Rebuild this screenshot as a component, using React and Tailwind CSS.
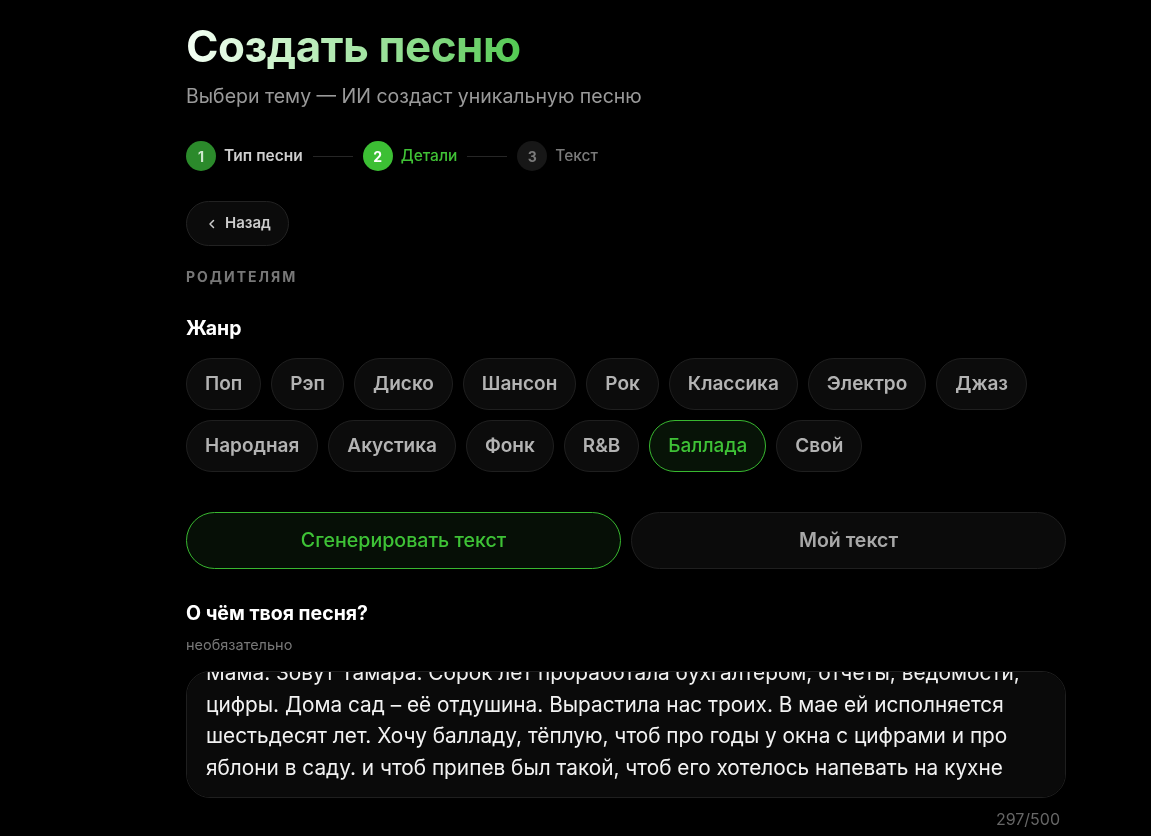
import React, { useLayoutEffect, useRef, useState } from "react";

const GENRES_ROW = [
  "Поп",
  "Рэп",
  "Диско",
  "Шансон",
  "Рок",
  "Классика",
  "Электро",
  "Джаз",
  "Народная",
  "Акустика",
  "Фонк",
  "R&B",
  "Баллада",
  "Свой",
];

const STORY =
  "Мама. Зовут Тамара. Сорок лет проработала бухгалтером, отчеты, ведомости, цифры. Дома сад – её отдушина. Вырастила нас троих. В мае ей исполняется шестьдесят лет. Хочу балладу, тёплую, чтоб про годы у окна с цифрами и про яблони в саду. и чтоб припев был такой, чтоб его хотелось напевать на кухне";

function Stepper() {
  return (
    <div className="flex items-center gap-[10px] mt-[33px]">
      <div className="flex items-center gap-[8px]">
        <span className="flex h-[30px] w-[30px] items-center justify-center rounded-full bg-[#2b8a2b] text-[14px] font-bold text-[#cfe9cf]">
          1
        </span>
        <span className="text-[15.5px] font-semibold text-[#cfcfcf]">Тип песни</span>
      </div>
      <span className="h-px w-[40px] bg-[#262626]" />
      <div className="flex items-center gap-[8px]">
        <span className="flex h-[30px] w-[30px] items-center justify-center rounded-full bg-[#3cbf34] text-[14px] font-bold text-white">
          2
        </span>
        <span className="text-[15.5px] font-medium text-[#40c236]">Детали</span>
      </div>
      <span className="h-px w-[40px] bg-[#262626]" />
      <div className="flex items-center gap-[8px]">
        <span className="flex h-[30px] w-[30px] items-center justify-center rounded-full bg-[#171717] text-[14px] font-bold text-[#7a7a7a]">
          3
        </span>
        <span className="text-[15.5px] font-medium text-[#7a7a7a]">Текст</span>
      </div>
    </div>
  );
}

function Chip({ label, active }) {
  return (
    <button
      className={
        active
          ? "h-[52px] rounded-full border border-[#38b830] bg-[#071307] px-[18px] text-[19px] font-medium text-[#3ec236]"
          : "h-[52px] rounded-full border border-[#1f1f1f] bg-[#0c0c0c] px-[18px] text-[19px] font-semibold text-[#b3b3b3]"
      }
    >
      {label}
    </button>
  );
}

export default function App() {
  const [genre] = useState("Баллада");
  const areaRef = useRef(null);

  useLayoutEffect(() => {
    const el = areaRef.current;
    if (el) el.scrollTop = el.scrollHeight;
  }, []);

  return (
    <div
      className="min-h-[836px] bg-black text-white"
      style={{ fontFamily: "Inter, 'Noto Sans', sans-serif" }}
    >
      <div className="w-[880px] ml-[186px] pt-[18px] pb-[10px]">
        <h1 className="text-[44px] font-bold leading-[56px] tracking-[-0.5px]">
          <span className="bg-gradient-to-r from-[#f4fff4] via-[#a8e6a8] to-[#52c952] bg-clip-text text-transparent">
            Создать песню
          </span>
        </h1>
        <p className="mt-[10px] text-[19.5px] leading-[24px] text-[#9a9a9a]">
          Выбери тему — ИИ создаст уникальную песню
        </p>

        <Stepper />

        <button className="mt-[30px] flex h-[45px] items-center gap-[8px] rounded-full border border-[#222] bg-[#0b0b0b] pl-[20px] pr-[17px] text-[15px] font-semibold text-[#cccccc]">
          <svg width="10" height="10" viewBox="0 0 10 10" fill="none">
            <path d="M6.5 1.5 3 5l3.5 3.5" stroke="#cccccc" strokeWidth="1.5" strokeLinecap="round" strokeLinejoin="round" />
          </svg>
          Назад
        </button>

        <div className="mt-[20px] text-[14px] font-bold uppercase tracking-[2px] text-[#777]">
          Родителям
        </div>

        <div className="mt-[27px] text-[19.5px] font-bold text-white">Жанр</div>

        <div className="mt-[15px] flex flex-wrap gap-[10px] w-[860px]">
          {GENRES_ROW.map((g) => (
            <Chip key={g} label={g} active={g === genre} />
          ))}
        </div>

        <div className="mt-[40px] grid grid-cols-2 gap-[10px]">
          <button className="h-[57px] rounded-full border border-[#38b830] bg-[#060f06] text-[19.6px] font-medium text-[#3ec236]">
            Сгенерировать текст
          </button>
          <button className="h-[57px] rounded-full border border-[#1f1f1f] bg-[#0b0b0b] text-[19.5px] font-semibold text-[#a8a8a8]">
            Мой текст
          </button>
        </div>

        <div className="mt-[30px] text-[19.5px] font-bold text-white">О чём твоя песня?</div>
        <div className="mt-[5px] text-[14.5px] text-[#777]">необязательно</div>

        <textarea
          ref={areaRef}
          readOnly
          value={STORY}
          rows={4}
          className="mt-[16px] block h-[127px] w-full resize-none overflow-y-auto rounded-[24px] border border-[#1f1f1f] bg-[#0a0a0a] px-[19px] pt-[14px] pb-[14px] text-[20.8px] leading-[31.5px] text-[#f2f2f2] outline-none [&::-webkit-scrollbar]:w-[6px] [&::-webkit-scrollbar-track]:bg-transparent [&::-webkit-scrollbar-thumb]:rounded-full [&::-webkit-scrollbar-thumb]:bg-[#232323]"
        />
        <div className="mt-[9px] pr-[6px] text-right text-[16px] text-[#666]">297/500</div>
      </div>
    </div>
  );
}
